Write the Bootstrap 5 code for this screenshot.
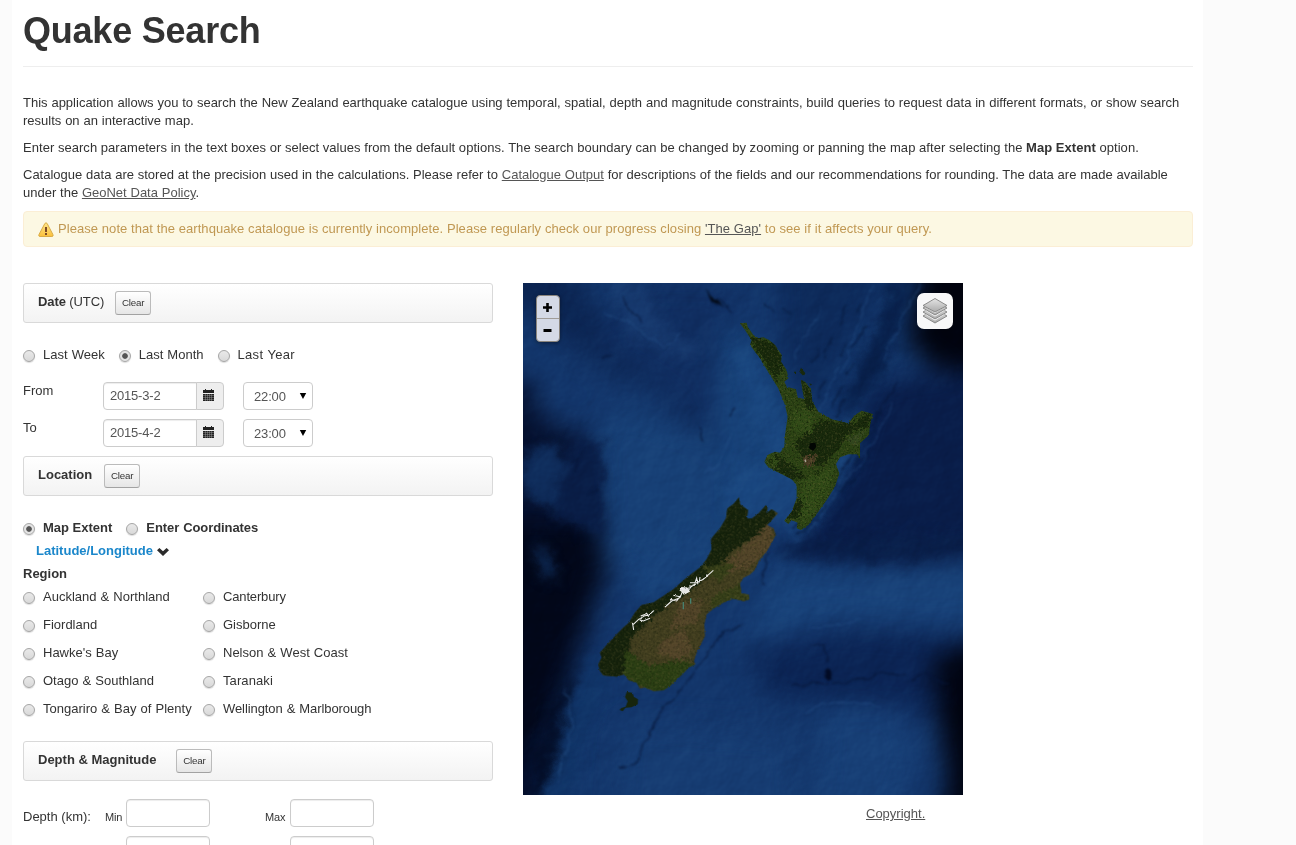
<!DOCTYPE html>
<html lang="en">
<head>
<meta charset="utf-8">
<title>Quake Search</title>
<link href="https://cdn.jsdelivr.net/npm/bootstrap@5.3.0/dist/css/bootstrap.min.css" rel="stylesheet">
<style>
body{background:#fbfbfb;font:13px/18px "Liberation Sans",Arial,sans-serif;color:#333;overflow:hidden;height:845px}
.page{width:1191px;margin-left:12px;padding:0 10px 0 11px;background:#fff;height:845px;overflow:hidden}
h1{font-size:36px;line-height:40px;font-weight:700;letter-spacing:-.22px;margin:0;padding:11px 0 15px;border-bottom:1px solid #eee;height:67px}
.intro{padding-top:27px;word-spacing:.24px}
.intro p{margin:0 0 9px}
.page a{color:#555}
.notice{height:36px;margin:0 0 36px;padding:8px 14px;background:#fcf8e3;border:1px solid #fbeed5;border-radius:4px;color:#c09853;gap:4px;letter-spacing:.06px;word-spacing:.05px}
.notice svg{margin-top:2px}
.side{width:470px}
.panel-head{height:40px;padding:0 14px;border:1px solid #d9d9d9;border-radius:3px;background:linear-gradient(#fff,#f3f3f3)}
.panel-head .title{line-height:36px}
.btn-clear{font-size:9.75px;line-height:14px;width:36px;height:24px;padding:3px 0;border:1px solid #bbb;border-bottom-color:#a2a2a2;border-radius:3px;background:linear-gradient(#fff,#e6e6e6);color:#333;margin-top:7px;letter-spacing:-.15px}
.opt{display:flex;height:18px;white-space:nowrap;word-spacing:.5px}
.opt input{appearance:none;width:12px;height:12px;flex:none;margin:4px 8px 0 0;border:1px solid #a5a5a5;border-radius:50%;background:linear-gradient(#e9e9e9,#d9d9d9);box-shadow:0 1px 1px #ddd}
.opt input:checked{background:radial-gradient(circle,#555 0 2.4px,#e4e4e4 3.2px)}
.fld{height:28px;border:1px solid #ccc;border-radius:4px;background:#fff;box-shadow:inset 0 1px 1px rgba(0,0,0,.075);padding:4px 6px;font-size:13px;line-height:18px;color:#555}
.date-in{width:94px;border-radius:4px 0 0 4px;letter-spacing:-.2px}
.addon{width:28px;margin-left:-1px;height:28px;border:1px solid #ccc;border-radius:0 4px 4px 0;background:#eee;padding:6px 0 0 5px}
.addon svg{display:block}
.hour{width:70px;margin-left:19px;padding:5px 5px 3px 10px;box-shadow:none;letter-spacing:-.15px}
.row-date{height:37px}
.row-date label{width:80px}
.regions{display:grid;grid-template-columns:180px 180px;row-gap:10px}
.num{width:84px}
.tiny{font-size:11px;letter-spacing:-.15px}
.map{width:440px;height:512px;position:relative;background:#123766}
.map svg{display:block}
.zoomer{position:absolute;left:13px;top:12px;width:24px;height:47px;border:1px solid #8b857d;border-radius:4px;background:#d4d9e6;color:#000;box-shadow:0 1px 4px rgba(0,0,0,.4)}
.zoomer div{height:22px}
.zoomer div+div{border-top:1px solid #a09c98}
.layers{position:absolute;left:394px;top:10px;width:36px;height:36px;border-radius:7px;background:#f8f8f9;padding:4px 5px}
</style>
</head>
<body>
<main class="page">
<h1>Quake Search</h1>
<section class="intro">
<p>This application allows you to search the New Zealand earthquake catalogue using temporal, spatial, depth and magnitude constraints, build queries to request data in different formats, or show search<br>results on an interactive map.</p>
<p style="word-spacing:0;letter-spacing:.04px">Enter search parameters in the text boxes or select values from the default options. The search boundary can be changed by zooming or panning the map after selecting the <b>Map Extent</b> option.</p>
<p style="word-spacing:.18px">Catalogue data are stored at the precision used in the calculations. Please refer to <a href="#">Catalogue Output</a> for descriptions of the fields and our recommendations for rounding. The data are made available<br>under the <a href="#">GeoNet Data Policy</a>.</p>
</section>
<div class="notice d-flex">
<svg width="16" height="16" viewBox="0 0 16 16" class="flex-shrink-0"><defs><linearGradient id="wg" x2="0" y2="1"><stop stop-color="#ffe78a"/><stop offset="1" stop-color="#fbc03c"/></linearGradient></defs><path d="M6.800 1.600q1.200-1.700 2.400 0l5.700 10.900q.8 2-1 2H2q-1.800 0-1-2z" fill="url(#wg)" stroke="#d9ab45"/><path d="M7 5h2v5H7zM7 11h2v2H7z" fill="#7b4a26"/></svg>
<div>Please note that the earthquake catalogue is currently incomplete. Please regularly check our progress closing <a href="#">'The Gap'</a> to see if it affects your query.</div>
</div>
<div class="d-flex">
<section class="side">
<div class="panel-head d-flex"><div class="title" style="letter-spacing:-.1px"><b>Date</b> (UTC)</div><button class="btn btn-clear" style="margin-left:11px">Clear</button></div>
<div class="d-flex" style="padding-top:23px;gap:14px">
<label class="opt"><input type="radio" name="d">Last Week</label><label class="opt"><input type="radio" name="d" checked>Last Month</label><label class="opt" style="letter-spacing:.3px"><input type="radio" name="d">Last Year</label></div>
<div style="padding-top:18px">
<div class="row-date d-flex"><label>From</label><div class="fld date-in">2015-3-2</div><div class="addon"><svg width="14" height="13" viewBox="0 0 14 13"><path d="M1 1h2V0h1v1h5V0h1v1h2v3H1zM1 5h11v7H1z" fill="#222"/><path d="M1 6.500h11M1 8.500h11M1 10.500h11M3.500 5v7M5.500 5v7M7.500 5v7M9.500 5v7" stroke="#aaa" stroke-width=".4"/></svg></div><div class="fld hour d-flex justify-content-between"><span>22:00</span><svg width="8" height="18" viewBox="0 0 8 18"><path d="M.8 5h6.400L4 11z"/></svg></div></div>
<div class="row-date d-flex"><label>To</label><div class="fld date-in">2015-4-2</div><div class="addon"><svg width="14" height="13" viewBox="0 0 14 13"><path d="M1 1h2V0h1v1h5V0h1v1h2v3H1zM1 5h11v7H1z" fill="#222"/><path d="M1 6.500h11M1 8.500h11M1 10.500h11M3.500 5v7M5.500 5v7M7.500 5v7M9.500 5v7" stroke="#aaa" stroke-width=".4"/></svg></div><div class="fld hour d-flex justify-content-between"><span>23:00</span><svg width="8" height="18" viewBox="0 0 8 18"><path d="M.8 5h6.400L4 11z"/></svg></div></div>
</div>
<div class="panel-head d-flex"><b class="title">Location</b><button class="btn btn-clear" style="margin-left:12px">Clear</button></div>
<div class="d-flex fw-bold" style="padding-top:23px;gap:14px"><label class="opt" style="word-spacing:0"><input type="radio" name="l" checked>Map Extent</label><label class="opt" style="letter-spacing:-.08px"><input type="radio" name="l">Enter Coordinates</label></div>
<div class="d-flex fw-bold" style="padding:5px 0 5px 13px;color:#1b87cb">Latitude/Longitude<svg width="12" height="10" viewBox="0 0 12 10" style="margin:5px 0 0 4px"><path d="M2.400 0.900L6 4.200 9.600.9 12 3.300 6 9 0 3.300z" fill="#2b2b2b"/></svg></div>
<div class="fw-bold" style="padding-bottom:5px">Region</div>
<div class="regions">
<label class="opt"><input type="radio" name="r">Auckland &amp; Northland</label><label class="opt" style="letter-spacing:-.15px"><input type="radio" name="r">Canterbury</label>
<label class="opt"><input type="radio" name="r">Fiordland</label><label class="opt"><input type="radio" name="r">Gisborne</label>
<label class="opt"><input type="radio" name="r">Hawke's Bay</label><label class="opt"><input type="radio" name="r">Nelson &amp; West Coast</label>
<label class="opt"><input type="radio" name="r">Otago &amp; Southland</label><label class="opt" style="letter-spacing:.1px"><input type="radio" name="r">Taranaki</label>
<label class="opt"><input type="radio" name="r">Tongariro &amp; Bay of Plenty</label><label class="opt" style="letter-spacing:-.08px"><input type="radio" name="r">Wellington &amp; Marlborough</label>
</div>
<div class="panel-head d-flex" style="margin-top:23px"><b class="title">Depth &amp; Magnitude</b><button class="btn btn-clear" style="margin-left:20px">Clear</button></div>
<div class="d-flex" style="margin-top:18px;height:37px"><div style="width:82px;padding-top:9px">Depth (km):</div><div class="tiny" style="width:21px;padding-top:9px">Min</div><div class="fld num"></div><div class="tiny" style="margin-left:55px;width:25px;padding-top:9px">Max</div><div class="fld num"></div></div>
<div class="d-flex"><div class="fld num" style="margin-left:103px"></div><div class="fld num" style="margin-left:80px"></div></div>
</section>
<section style="margin-left:30px">
<div class="map">
<svg width="440" height="512" viewBox="0 0 440 512" color-interpolation-filters="sRGB">
<defs>
<filter id="soft" x="-40%" y="-40%" width="180%" height="180%"><feGaussianBlur stdDeviation="13"/></filter>
<filter id="mid" x="-40%" y="-40%" width="180%" height="180%"><feGaussianBlur stdDeviation="6" result="b"/><feTurbulence type="fractalNoise" baseFrequency=".05" numOctaves="4" seed="5"/><feDisplacementMap in="b" scale="18" xChannelSelector="R" yChannelSelector="G"/></filter>
<filter id="thin" x="-30%" y="-30%" width="160%" height="160%"><feTurbulence type="fractalNoise" baseFrequency=".07" numOctaves="3" seed="8"/><feDisplacementMap in="SourceGraphic" scale="9" xChannelSelector="R" yChannelSelector="G"/><feGaussianBlur stdDeviation=".8"/></filter>
<filter id="coast" x="-10%" y="-10%" width="120%" height="120%"><feTurbulence type="fractalNoise" baseFrequency=".2" numOctaves="3" seed="3"/><feDisplacementMap in="SourceGraphic" scale="6" xChannelSelector="R" yChannelSelector="G"/></filter>
<filter id="patch" x="-10%" y="-10%" width="120%" height="120%"><feTurbulence type="fractalNoise" baseFrequency=".12" numOctaves="4" seed="9"/><feDisplacementMap in="SourceGraphic" scale="34" xChannelSelector="R" yChannelSelector="G"/><feGaussianBlur stdDeviation=".6"/></filter>
<filter id="relief" x="0" y="0" width="100%" height="100%"><feTurbulence type="fractalNoise" baseFrequency=".03" numOctaves="4" seed="21"/><feColorMatrix values="0 0 0 0 0 0 0 0 0 0 0 0 0 0 0 1 0 0 0 0"/><feDiffuseLighting surfaceScale="4" diffuseConstant="1" lighting-color="#fff"><feDistantLight azimuth="225" elevation="30"/></feDiffuseLighting></filter>
<filter id="grain" x="0" y="0" width="100%" height="100%"><feTurbulence type="fractalNoise" baseFrequency=".2" numOctaves="4" seed="4"/><feColorMatrix values="0 0 0 0 .05 0 0 0 0 .09 0 0 0 0 .02 3 0 0 0 -1.500"/></filter>
<filter id="grain2" x="0" y="0" width="100%" height="100%"><feTurbulence type="fractalNoise" baseFrequency=".16" numOctaves="3" seed="14"/><feColorMatrix values="0 0 0 0 .5 0 0 0 0 .46 0 0 0 0 .25 0 3 0 0 -1.500"/></filter>
<path id="ni" d="M45 40L65 38 68 50 85 75 100 84 115 82 132 90 150 105 170 135 168 155 185 180 190 205 178 215 185 230 213 238 218 262 238 268 232 240 228 210 240 215 258 238 262 275 280 305 320 328 370 340 390 315 410 302 443 312 435 345 432 375 405 400 405 445 396 433 370 433 345 442 333 462 343 490 330 530 305 570 280 605 250 645 228 660 215 655 218 638 200 630 190 642 178 632 200 605 215 565 215 525 200 508 165 490 130 472 118 455 128 435 150 425 165 428 178 410 180 375 188 320 180 285 160 235 135 195 105 145 75 105 80 90 60 60z"/>
<path id="si" d="M580 0L600-23 618-53 622-83 640-96 657-116 660-95 684-78 681-53 696-53 716-68 738-93 743-83 738-68 755-80 774-68 760-53 741-33 761-23 768 0 763 5 741 45 716 75 706 100 691 115 671 125 660 142 664 172 686 176 688 190 671 195 640 188 610 200 580 218 560 235 553 265 555 300 530 350 522 375 526 385 505 395 490 412 470 430 450 450 430 463 400 465 375 455 360 458 350 440 325 432 312 415 290 422 250 418 240 405 235 385 245 365 240 350 262 325 290 295 310 275 325 262 345 230 365 207 400 200 430 180 460 160 500 125 540 95 560 70 575 40 573 10z"/>
<clipPath id="cn"><use href="#ni"/></clipPath><clipPath id="cs"><use href="#si"/></clipPath>
<linearGradient id="stk" x2="0" y2="1"><stop stop-color="#e4e4e4"/><stop offset="1" stop-color="#aaa"/></linearGradient>
</defs>
<rect width="440" height="512" fill="#13366b"/>
<g filter="url(#soft)">
<path d="M-30-30H35L95 60 200 105 240 170 190 165 130 105 60 75 20 30-30 20z" fill="#0b2451"/>
<path d="M110 0H210L220 90 190 150 110 80 70 60z" fill="#102e61"/>
<path d="M90 120L180 150 210 200 200 290 120 310 80 270 75 160z" fill="#174076"/>
<path d="M200 30L260 100 280 180 230 230 220 290 200 270 200 200 190 150z" fill="#174279"/>
<path d="M-30 90L10 100 20 140 60 150 78 240 70 330 40 420 20 540H-30z" fill="#05102e"/>
<path d="M-30 240L70 240 85 285 50 370 30 430-30 520z" fill="#020719"/>
<path d="M255-30H370L300 120 260 90z" fill="#0d2a5a"/>
<path d="M400-50H500V110L405 80 385 60z" fill="#01030e"/>
<path d="M350 100L500 80V290L290 277 265 250 320 190z" fill="#091d49"/>
<path d="M250 285L500 275 500 345 300 340 220 360z" fill="#184279"/>
<path d="M220 370L330 345 500 355V450L350 420 250 415z" fill="#0b2454"/>
<path d="M410 375L500 345V600H400L425 500 415 430z" fill="#01030f"/>
<path d="M300 420L380 425 395 470 370 540 290 535z" fill="#173f76"/>
<path d="M100 440L270 450 280 560 90 560z" fill="#163c72"/>
</g>
<g filter="url(#mid)">
<path d="M0 170L30 160 55 200 40 230 0 215z" fill="#0f2d5c"/><path d="M55 150L80 160 80 250 40 240 30 215z" fill="#091d46"/>
<path d="M15 255L30 280 35 300 15 290z" fill="#0d2852"/><path d="M110 280L185 240 180 280 120 320z" fill="#184279"/>
<path d="M15 522L45 430 70 370 85 400 60 460 45 522z" fill="#103467"/><path d="M6 512L32 420 55 380 42 430 26 500z" fill="#020b23"/>
<path d="M245 272L275 258 450 252V268L380 278 320 276z" fill="#091e48"/>
<path d="M370 0L390 0 360 95 310 140z" fill="#08204b"/>
<path d="M120 0L145 50 175 65 160 75 105 50 85 0z" fill="#1a4075" opacity=".6"/>
<path d="M205 60L235 75 255 130 285 150 330 135 340 150 318 200 290 250 265 255 262 240 235 240 200 220 215 180 255 190z" fill="#1b4882" opacity=".7"/>
</g>
<rect width="440" height="512" filter="url(#relief)" opacity=".13" style="mix-blend-mode:soft-light"/>
<g fill="none" stroke="#061537" stroke-width="1.400" opacity=".75" filter="url(#thin)">
<path d="M221 343Q198 347 185 370T150 415Q128 440 120 465T95 484"/><path d="M268 401Q300 403 325 398L348 396 360 389 385 391M388 397L400 391 425 402"/><path d="M288 361L301 362 305 377M178 142V158M52 190L60 165M22 235L32 222M66 213L74 204M245 270L240 302M205 132L212 125M100 12L105 25 120 40M155 330L130 342M375 100L330 170 310 205 270 245M80 76L90 70" /></g>
<g fill="none" stroke="#28558c" stroke-width="1.200" opacity=".5" filter="url(#thin)"><path d="M350 0L318 90M397 0L360 75M370 120L350 160 330 190 285 250M80 30L110 42 140 65 160 50M290 345L340 338M282 430Q320 410 360 425M315 85L295 130M210 150L195 180 180 190M300 20L270 75M42 405L50 440 35 500"/></g>
<g stroke="#071b40" opacity=".8" stroke-width="1.500" filter="url(#thin)"><path d="M297 65L290 80M310 55L302 75M318 105L309 125M326 22L317 42M345 42L330 65M302 95L296 115M321 115L313 135M347 150L330 180M354 130L350 150M333 195L315 210M305 222L285 241M295 237L273 250M182 5L190 20 200 22M195 15L210 28M240 20L250 28M260 25L268 33M338 20L333 30M322 60L316 72M332 80L322 92M345 170L338 186M295 215L284 232"/></g>
<ellipse cx="305" cy="391" rx="3.500" ry="5.500" fill="#020b24" filter="url(#thin)"/>
<g transform="translate(202 27) scale(.33333)"><g filter="url(#coast)"><use href="#ni" fill="#2b4214"/><g clip-path="url(#cn)"><g filter="url(#patch)"><path d="M75 80L150 100 175 155 155 210 100 130zM230 200L270 270 260 330 240 280zM290 330L380 340 440 300 430 350 370 370 330 430 290 470 240 460 210 400 240 370zM155 430L240 500 200 510 150 480zM180 630L280 480 290 510 220 620z" fill="#18290c"/><path d="M205 300L262 300 262 365 200 370zM120 440L150 430 160 480zM230 510L330 470 300 570 230 650z" fill="#304a17"/><path d="M360 390L420 360 395 410z" fill="#34481f"/><path d="M235 440L275 435 262 475 235 460z" fill="#4a3c25"/></g><rect width="480" height="675" filter="url(#grain)" opacity=".6"/><rect width="480" height="675" filter="url(#grain2)" opacity=".3"/></g><path d="M228 173L241 190 236 199 223 185zM207 185l6 0 0 4-5 0zM253 220l8 3-4 4z" fill="#18280d"/></g><path d="M255 400L271 398 274 410 264 423 252 414z" fill="#020603"/><circle cx="137" cy="453" r="5" fill="none" stroke="#152507" stroke-width="3"/><path d="M238 450l5-2 1 8-4 1z" fill="#aaa392"/></g>
<g transform="translate(-3 253) scale(.33333)"><g filter="url(#coast)"><use href="#si" fill="#423e20"/><g clip-path="url(#cs)"><g filter="url(#patch)"><path d="M580-20L650-120 780-90 740-20 640 40 580 110 490 180 400 240 330 310 330 430 220 430 230 330 360 200 500 120z" fill="#15220c"/><path d="M315 340L390 390 490 370 520 390 430 475 350 450 310 420z" fill="#2b3f14"/><path d="M420 320L490 280 520 340 480 375 410 350zM570 120L640 60 750-40 760 30 680 100zM480 200L550 190 530 260 450 280z" fill="#54452a"/><path d="M580 180L690 130 690 200 570 230 550 310zM540 90L650 80 600 140z" fill="#363f19"/></g><rect y="-130" x="220" width="570" height="610" filter="url(#grain)" opacity=".6"/><rect y="-130" x="220" width="570" height="610" filter="url(#grain2)" opacity=".35"/></g><path d="M320 468L337 470 342 483 354 490 353 505 334 514 316 515 308 526 299 522 304 516 317 512 323 496 315 483z" fill="#17250d"/></g>
<g stroke="#eeeeed" fill="none" stroke-width="3.200" filter="url(#coast)"><path d="M435 213L455 195 480 185 490 160 510 155 530 140 550 130 580 103M450 190l20 5 12-16M460 178l20 4M485 155l15 15 15-20M480 165l5-10 15 1 6 12M507 150l18-2M510 140l15 0 5-14 4 20M540 123l-2 16M560 115l2 8M337 258l4 24M340 265l15-14 20-12 12-2 15-14M355 250l15 5 20-8M370 238l10-6 6 10M362 240l10-4"/><path d="M482 162L500 156 508 166 492 174z" fill="#e4e5e3"/></g><path d="M490 198V220M512 187V203" stroke="#47806f" stroke-width="4"/></g>
</svg>
<div class="zoomer"><div><svg width="22" height="22"><path d="M6 11.500h9M10.500 7v9" stroke="#000" stroke-width="2.600"/></svg></div><div><svg width="22" height="22"><path d="M6.500 11.500h8" stroke="#000" stroke-width="3"/></svg></div></div>
<div class="layers"><svg width="26" height="28" viewBox="0 0 26 28"><g fill="url(#stk)" stroke="#808080" stroke-width=".9"><path d="M1 19L13 12l12 7L13 26z"/><path d="M2 16.500L13 9.500l11 7L13 23.500z" fill="#f8f8f9" stroke="none"/><path d="M1 15L13 8l12 7L13 22z"/><path d="M2 12.500L13 5l11 7.500L13 19.500z" fill="#f8f8f9" stroke="none"/><path d="M1 11L13 4l12 7L13 18z"/><path d="M2 9L13 2l11 7L13 16z" fill="#f8f8f9" stroke="none"/><path d="M1 8.500L13 1.500l12 7L13 15z"/></g></svg></div>
</div>
<div style="padding:10px 0 0 343px"><a href="#">Copyright.</a></div>
</section>
</div>
</main>
<script src="https://cdn.jsdelivr.net/npm/bootstrap@5.3.0/dist/js/bootstrap.bundle.min.js"></script>
</body>
</html>
